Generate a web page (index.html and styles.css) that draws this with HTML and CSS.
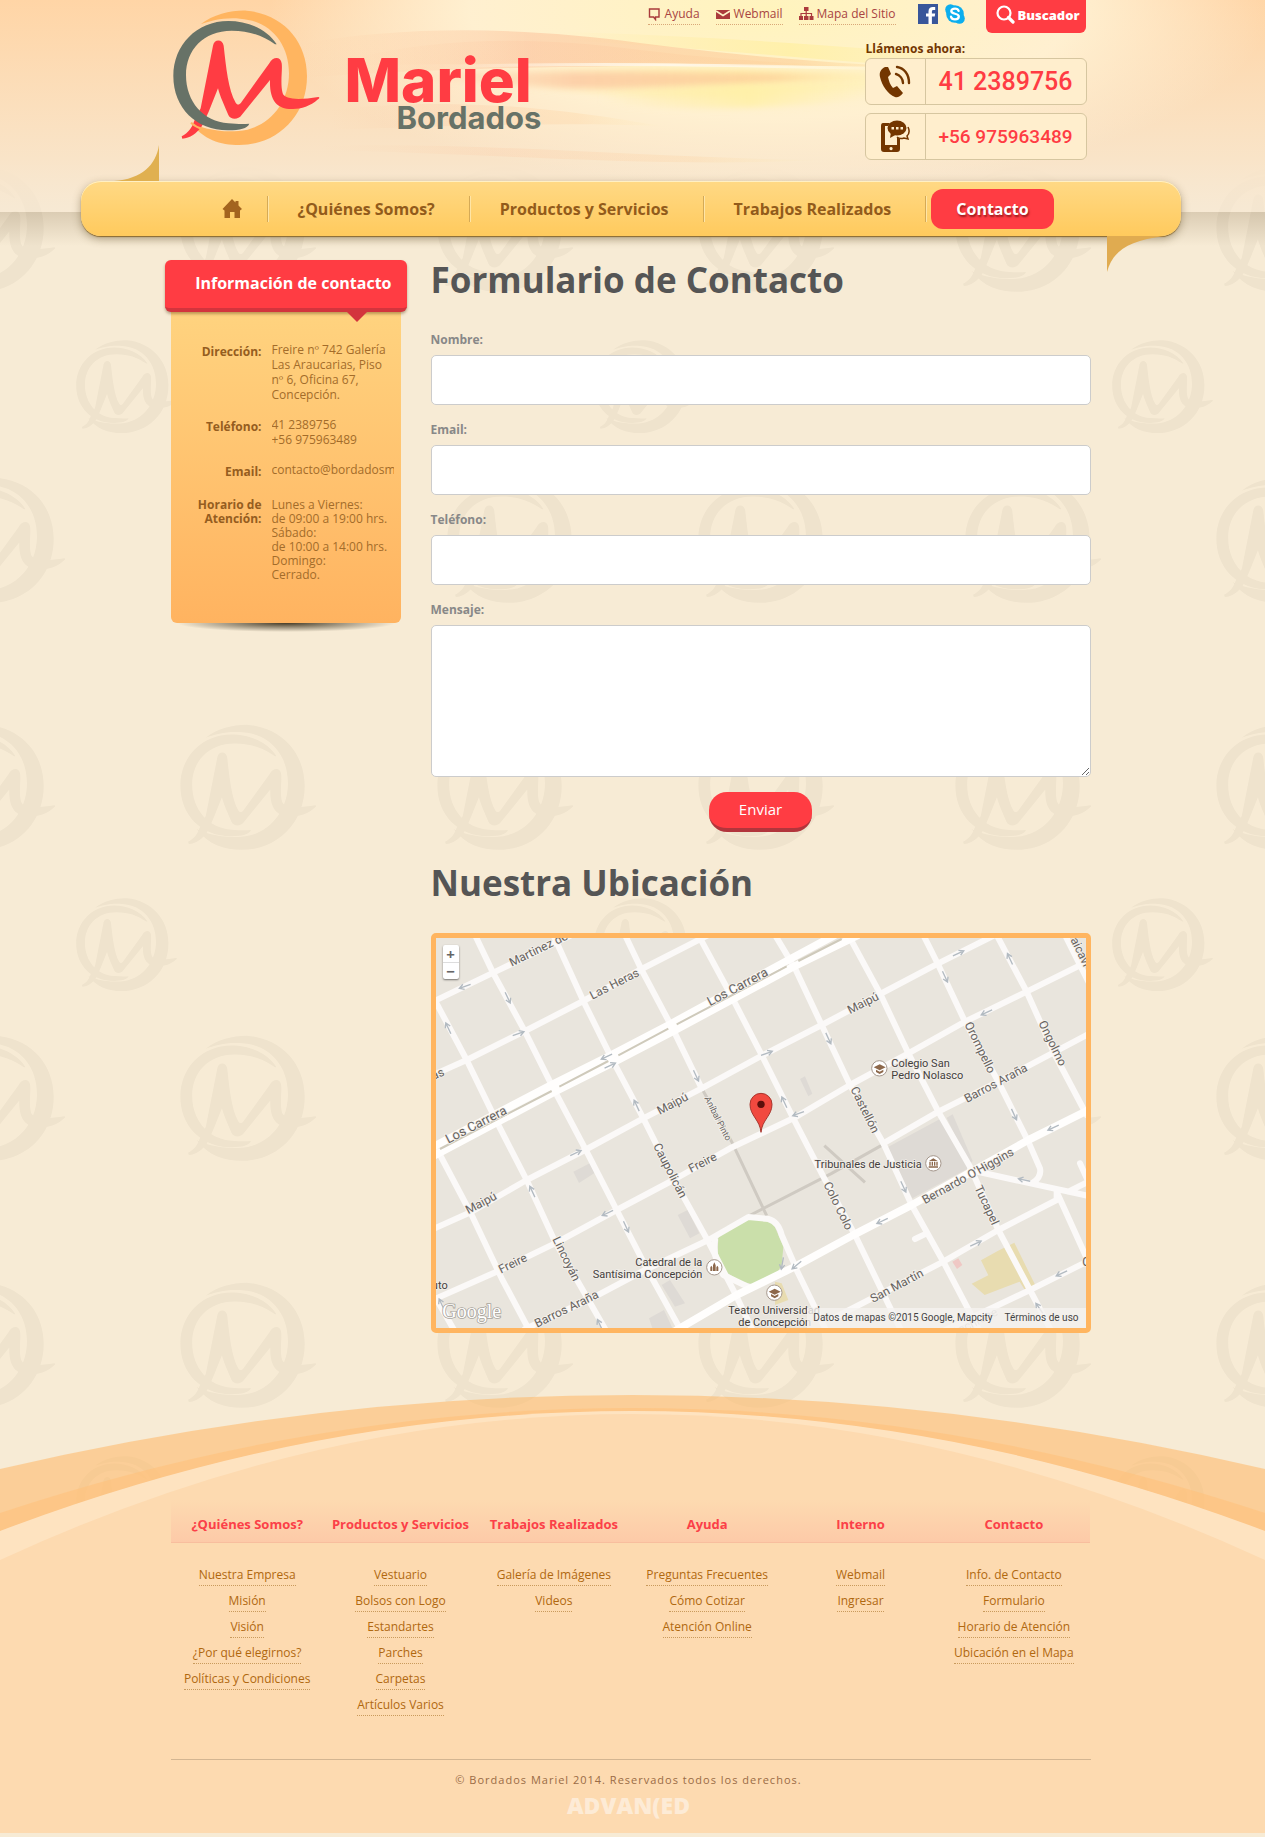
FILE: index.html
```html
<!DOCTYPE html>
<html lang="es">
<head>
<meta charset="utf-8">
<meta name="viewport" content="width=device-width, initial-scale=1">
<title>Contacto - Bordados Mariel</title>
<link rel="stylesheet" href="styles.css">
</head>
<body>
<div class="page">

<svg class="watermarks" aria-hidden="true">
  <defs>
    <path id="mark-ring" d="M122 73C160 42 220 30 260 32C370 42 441 125 441 228C441 350 350 435 238 435C180 435 130 418 92 368C115 380 170 398 235 393C320 388 387 315 387 220C387 130 330 62 240 56C190 52 155 62 122 73Z"/>
    <path id="mark-arc" d="M350 133C320 85 260 63 205 63C110 63 40 135 40 228C40 325 110 392 205 391C240 391 262 385 268 371C250 373 230 372 205 370C130 365 78 305 78 225C78 150 130 92 215 92C270 92 310 108 345 133Z"/>
    <path id="mark-m" d="M65 409C85 398 95 385 103 362L122 325L159 137C162 116 188 116 191 137C198 200 205 270 227 308C232 316 238 314 243 308L328 190C338 170 362 168 365 190C368 210 360 250 368 280C375 300 420 300 475 291C480 292 478 296 474 298C450 320 420 328 395 327C350 327 328 300 330 240L245 345C235 360 212 360 205 345C195 320 180 290 174 265L146 335L126 378C110 400 90 415 67 416Z"/>
    <g id="mark"><use href="#mark-ring"/><use href="#mark-m"/><use href="#mark-arc"/></g>
    <pattern id="tile" width="518" height="558" patternUnits="userSpaceOnUse">
      <g fill="#efe3cd">
        <use href="#mark" transform="translate(168 157) scale(.31)"/>
        <use href="#mark" transform="translate(425 157) scale(.31)"/>
        <use href="#mark" transform="translate(-93 157) scale(.31)"/>
        <use href="#mark" transform="translate(67 333) scale(.23)"/>
        <use href="#mark" transform="translate(168 468) scale(.31)"/>
        <use href="#mark" transform="translate(435 468) scale(.31)"/>
        <use href="#mark" transform="translate(-83 468) scale(.31)"/>
        <use href="#mark" transform="translate(168 -90) scale(.31)"/>
        <use href="#mark" transform="translate(435 -90) scale(.31)"/>
        <use href="#mark" transform="translate(-83 -90) scale(.31)"/>
      </g>
    </pattern>
  </defs>
  <rect width="100%" height="100%" fill="url(#tile)"/>
</svg>

<svg class="sky" viewBox="0 0 1265 212" preserveAspectRatio="none" aria-hidden="true">
  <defs>
    <linearGradient id="base" x1="0" y1="0" x2="0" y2="1">
      <stop offset="0" stop-color="#ffd5a6"/><stop offset=".75" stop-color="#f9e4c8"/><stop offset="1" stop-color="#f7e8d3" stop-opacity=".6"/>
    </linearGradient>
    <radialGradient id="glow" gradientUnits="userSpaceOnUse" cx="0" cy="0" r="1" gradientTransform="translate(770 10) scale(500 180)">
      <stop offset="0" stop-color="#fff4bd"/><stop offset=".6" stop-color="#fff1d2" stop-opacity=".95"/><stop offset="1" stop-color="#fff1d8" stop-opacity="0"/>
    </radialGradient>
    <linearGradient id="band" x1="0" y1="0" x2="1" y2="0">
      <stop offset="0" stop-color="#fdcfa5" stop-opacity="0"/><stop offset=".35" stop-color="#fcc6a0" stop-opacity=".75"/><stop offset=".75" stop-color="#fdcf99" stop-opacity=".8"/><stop offset="1" stop-color="#ffeaa5" stop-opacity=".1"/>
    </linearGradient>
    <linearGradient id="gold" x1="0" y1="0" x2="1" y2="0">
      <stop offset="0" stop-color="#ffedad" stop-opacity="0"/><stop offset=".5" stop-color="#fff0a8" stop-opacity=".9"/><stop offset="1" stop-color="#fff0b5" stop-opacity="0"/>
    </linearGradient>
    <linearGradient id="line" x1="0" y1="0" x2="1" y2="0">
      <stop offset="0" stop-color="#fff" stop-opacity="0"/><stop offset=".5" stop-color="#fff7e6"/><stop offset="1" stop-color="#fff" stop-opacity="0"/>
    </linearGradient>
    <filter id="soft" x="-10%" y="-40%" width="120%" height="180%"><feGaussianBlur stdDeviation="3"/></filter>
  </defs>
  <rect width="1265" height="212" fill="url(#base)"/>
  <rect width="1265" height="212" fill="url(#glow)"/>
  <path fill="url(#gold)" d="M560 32C720 36 860 48 1020 60L1000 72C850 64 740 50 560 40Z"/>
  <path fill="url(#band)" opacity=".8" d="M300 44C400 26 520 26 640 43C760 58 860 66 960 68C740 64 480 64 300 78Z"/>
  <path fill="url(#band)" d="M340 62C430 36 540 36 640 50C740 62 840 66 900 68C740 62 480 62 340 66Z" opacity=".4"/>
  <path fill="url(#gold)" filter="url(#soft)" d="M480 70C640 64 800 72 1000 76L980 84C860 84 740 106 600 94C540 90 510 84 480 80Z"/>
  <path fill="url(#band)" filter="url(#soft)" d="M400 74C580 70 720 72 900 76C780 80 660 90 560 88C500 84 460 80 400 78Z"/>
  <path stroke="url(#line)" stroke-width="3" fill="none" d="M440 67C580 62 720 65 900 69"/>
  <path fill="url(#gold)" filter="url(#soft)" d="M600 92C700 88 800 84 900 86C860 108 700 112 600 104Z"/>
  <path fill="url(#band)" opacity=".35" d="M330 110C450 96 560 108 660 126C560 122 450 126 330 130Z"/>
  <path fill="url(#band)" opacity=".3" d="M320 146C500 142 640 158 820 160C660 168 500 154 320 150Z"/>
</svg>
<div class="sky-shadow"></div>

<header class="top wrap">
  <a class="brand" href="#">
    <svg class="brand-mark" viewBox="33 30 450 408" aria-hidden="true">
      <use href="#mark-ring" fill="#ffb560"/>
      <use href="#mark-m" fill="#ff3c43"/>
      <use href="#mark-arc" fill="#677267"/>
      <path d="M93 368C104 378 116 384 128 387" stroke="#ffb560" stroke-width="6" fill="none"/>
    </svg>
    <span class="brand-text"><span class="brand-name">Mariel</span><span class="brand-sub">Bordados</span></span>
  </a>
  <div class="tools">
    <div class="quick">
      <a class="quick-link" href="#"><svg width="14" height="14" viewBox="0 0 14 14" aria-hidden="true"><path d="M1.500 2h9.500v8h-3.500v2.500l-2-2.500h-4z" fill="none" stroke="#a93b3b" stroke-width="1.400"/></svg>Ayuda</a>
      <a class="quick-link" href="#"><svg width="15" height="14" viewBox="0 0 15 14" aria-hidden="true"><path d="M0 3h14v9h-14z" fill="#ab3a3c"/><path d="M0 4l7 4.500l7-4.500" stroke="#fff3c8" stroke-width="1.600" fill="none"/></svg>Webmail</a>
      <a class="quick-link" href="#"><svg width="15" height="14" viewBox="0 0 15 14" aria-hidden="true"><path d="M5 0h4.500v4h-4.500zM0 9h4v4h-4zM5 9h4.500v4h-4.500zM10.500 9h4v4h-4z" fill="#ab3a3c"/><path d="M2 9v-2.500h10.500v2.500M7.200 4v5" stroke="#ab3a3c" stroke-width="1.200" fill="none"/></svg>Mapa del Sitio</a>
      <a class="social" href="#" aria-label="Facebook"><svg width="20" height="20" viewBox="0 0 20 20"><path fill="#38569a" d="M0 0h20v20h-20z"/><path fill="#fff" d="M10.500 20v-7.500h-2.500v-3h2.500v-2c0-3 1.800-4.400 4.300-4.400h2.400v3h-1.700c-1.200 0-1.600.6-1.600 1.600v1.800h3.300l-.5 3h-2.800v7.500z"/></svg></a>
      <a class="social" href="#" aria-label="Skype"><svg width="20" height="20" viewBox="0 0 20 20"><circle cx="10" cy="10" r="8.800" fill="#0caeee"/><circle cx="5.500" cy="5.500" r="5.300" fill="#0caeee"/><circle cx="14.500" cy="14.500" r="5.300" fill="#0caeee"/><path d="M13.600 6.800C13 5 11.600 4.600 10 4.600C7.500 4.600 6.200 5.800 6.300 7.200C6.500 10.700 13.900 8.800 13.800 12.500C13.800 14.300 12.200 15.400 10 15.400C7.800 15.400 6.400 14.500 6 12.700" fill="none" stroke="#fff" stroke-width="2.300" stroke-linecap="round"/></svg></a>
      <button class="search" type="button"><svg width="19" height="19" viewBox="0 0 19 19" aria-hidden="true"><circle cx="8" cy="8" r="6.500" fill="none" stroke="#fff" stroke-width="2.200"/><path d="M12.500 12.500l4.500 4.500" stroke="#fff" stroke-width="3.200" stroke-linecap="round"/></svg>Buscador</button>
    </div>
    <div class="phones">
      <p class="phones-title">Llámenos ahora:</p>
      <div class="phone"><span class="phone-icon"><svg width="32" height="33" viewBox="0 0 32 33" aria-hidden="true"><path fill="#733600" d="M6 2C2 4 0 7 1 12C3 21 9 29 16 32C18 33 21 32 24 28L18 21L14 23C11 20 10 16 9 12L12 9C11 6 10 4 9 2Z"/><path fill="none" stroke="#733600" stroke-width="2.400" stroke-linecap="round" d="M17 9C21 10 24 14 24 18M18 2C25 3 30 9 30 18"/></svg></span><span class="phone-number">41 2389756</span></div>
      <div class="phone"><span class="phone-icon"><svg width="32" height="33" viewBox="0 0 32 33" aria-hidden="true"><path fill="#733600" fill-rule="evenodd" d="M4 3h7l-2 3h-3v19h12v-8l3 2v10q0 3-3 3h-13q-3 0-3-3v-23q0-3 2-3zM12 27a1.600 1.600 0 1 0 .1 0z"/><ellipse cx="18" cy="8" rx="9.500" ry="7.500" fill="#733600"/><path fill="#733600" d="M12 12l-1 6l7-4z"/><path fill="#ffeecd" d="M12.500 7h2.500v2.500h-2.500zM17 7h2.500v2.500h-2.500zM21.500 7h2.500v2.500h-2.500z"/><path fill="none" stroke="#733600" stroke-width="1.500" d="M29 7C31 11 30 14 28 16L29 19L25 18C22 19 19 18 18 17"/></svg></span><span class="phone-number phone-number-long">+56 975963489</span></div>
    </div>
  </div>
</header>

<nav class="nav" aria-label="Principal">
  <svg class="tail tail-left" viewBox="0 0 45 36" aria-hidden="true"><path fill="#e0b050" d="M45 0V36H0C28 34 42 20 45 0Z"/></svg>
  <svg class="tail tail-right" viewBox="0 0 57 36" aria-hidden="true"><path fill="#e0ab50" d="M0 36V0H57C22 5 6 14 0 36Z"/></svg>
  <ul class="nav-list">
    <li><a class="nav-home" href="#" aria-label="Inicio"><svg width="20" height="20" viewBox="0 0 20 20" aria-hidden="true"><path fill="#a3641f" d="M10 0L13.500 3.600V2H16.500V6.500L20 10L18 11.500V19H12.500V13H8V19H2.500V11.500L.5 10Z"/></svg></a></li>
    <li><a href="#">¿Quiénes Somos?</a></li>
    <li><a href="#">Productos y Servicios</a></li>
    <li><a href="#">Trabajos Realizados</a></li>
    <li><a class="nav-active" href="#" aria-current="page">Contacto</a></li>
  </ul>
</nav>

<div class="content wrap">
  <aside class="info">
    <h2 class="info-title">Información de contacto</h2>
    <dl class="info-list">
      <div class="info-row"><dt>Dirección:</dt><dd>Freire nº 742 Galería Las Araucarias, Piso nº 6, Oficina 67, Concepción.</dd></div>
      <div class="info-row"><dt>Teléfono:</dt><dd>41 2389756<br>+56 975963489</dd></div>
      <div class="info-row"><dt>Email:</dt><dd>contacto@bordadosmariel.cl</dd></div>
      <div class="info-row info-hours"><dt>Horario de Atención:</dt><dd>Lunes a Viernes:<br>de 09:00 a 19:00 hrs.<br>Sábado:<br>de 10:00 a 14:00 hrs.<br>Domingo:<br>Cerrado.</dd></div>
    </dl>
  </aside>

  <main class="main">
    <h1>Formulario de Contacto</h1>
    <form class="form">
      <label for="nombre">Nombre:</label>
      <input id="nombre" type="text">
      <label for="email">Email:</label>
      <input id="email" type="email">
      <label for="telefono">Teléfono:</label>
      <input id="telefono" type="tel">
      <label for="mensaje">Mensaje:</label>
      <textarea id="mensaje"></textarea>
      <button class="send" type="submit">Enviar</button>
    </form>
    <h2 class="map-title">Nuestra Ubicación</h2>
    <div class="map">
      <svg class="map-svg" viewBox="33 39 1950 1170" role="img" aria-label="Mapa de Concepción">
        <path fill="#e9e5dd" d="M0 0H2000V1220H0z"/>
        <g fill="#dedad5">
          <path d="M1385 668L1545 582L1630 730L1462 820z"/>
          <path d="M1565 578l18-10l60 140l-12 12z"/>
          <path d="M445 740l55-28l12 30l-50 32zM758 870l30-15l35 70l-28 15zM710 1080l25-15l45 70l-30 10zM672 1180l45-25l25 54h-60zM1125 462l15-8l22 52l-12 8z"/>
        </g>
        <path fill="#e8dcb0" d="M1640 1076l50-25l-22-45l50-28l50-25l66 134l-30 15l-20-32l-105 40zM1050 1070l20 5l20 50l-40 15z"/>
        <path fill="#efc8c4" d="M1582 1010l18-10l12 20l-16 12z"/>
        <path fill="#cadfaa" d="M880 940L900 907L970 882L1015 882L1045 895L1075 965L1070 1020L1050 1055L985 1078L950 1070L897 1038L877 990z"/>
        <g fill="none" stroke="#cfcac2" stroke-width="9">
          <path d="M830 490L920 650L1025 872M965 876L1220 745L1375 658M1198 662L1320 772"/>
        </g>
        <g class="streets">
          <path d="M20 232L205 143L440 30M20 452L125 405L300 318L475 228L650 132L850 30"/>
          <path d="M20 914L140 860L305 765L480 675L655 580L830 490L1005 395L1190 300L1360 210L1540 115L1710 30"/>
          <path d="M20 1126L215 1040L390 955L575 855L745 765L915 670L1105 580L1275 480L1450 385L1620 290L1805 200L2000 104"/>
          <path d="M300 1212L500 1120L660 1035L850 945L970 876L1030 882Q1060 890 1070 930L1110 1022M1375 655L1540 560L1720 470L2000 322"/>
          <path d="M870 945Q862 1000 895 1050L975 1088M1220 1182L1555 1010L1720 915L1895 825L1895 800M1635 735L1770 765L2000 815M1895 800L1990 1010M1560 1216L1815 1095L2000 1003M1930 800L2000 765M1965 715L1990 770"/>
          <path d="M33 232L125 405L215 590L305 765L390 950L545 1220M150 30L205 145L300 320L385 490L480 670L575 855L665 1030L770 1220M385 30L475 228L560 400L655 580L745 760L850 950L930 1105L985 1220"/>
          <path d="M600 30L650 135L740 305L830 490M820 30L920 215L1010 390L1105 580L1195 755L1290 930L1430 1220M1050 30L1110 130L1190 300L1275 480L1375 655L1460 840L1555 1010L1665 1220"/>
          <path d="M1270 30L1365 205L1450 385L1540 560L1635 725L1720 915L1815 1095L1880 1220M1495 30L1540 120L1620 290L1720 470L1810 650L1845 730Q1850 755 1825 772M1715 30L1805 200L1890 390L1985 570M1920 30L1990 170"/>
          <path d="M40 680L140 870L230 1060L315 1220M33 1120L90 1220M1110 1025L1205 1220M1470 942L1505 925"/>
        </g>
        <g class="avenues">
          <path d="M20 668L375 482L555 392L735 298L1090 105L1230 30M20 696L390 500L570 410L745 318L1100 128L1300 30"/>
          <path d="M750 1218L935 1110L1110 1025L1285 930L1460 840L1640 740L1810 645L2000 550"/>
        </g>
        <path stroke="#cfcabb" stroke-width="6" fill="none" d="M45 672L380 498M403 485L550 408M580 391L730 311M755 298L1085 124M1120 108L1250 42"/>
        <defs><path id="arrow" d="M-18 0H16M4-8L18 0L4 8"/></defs>
        <g class="arrows">
          <use href="#arrow" transform="translate(280 326) rotate(-20)"/><use href="#arrow" transform="translate(555 422) rotate(-25)"/>
          <use href="#arrow" transform="translate(452 684) rotate(-25)"/><use href="#arrow" transform="translate(1025 385) rotate(-20)"/>
          <use href="#arrow" transform="translate(1600 85) rotate(-25)"/><use href="#arrow" transform="translate(1652 956) rotate(-25)"/>
          <use href="#arrow" transform="translate(120 184) rotate(160)"/><use href="#arrow" transform="translate(545 395) rotate(155)"/>
          <use href="#arrow" transform="translate(548 864) rotate(155)"/><use href="#arrow" transform="translate(1120 566) rotate(160)"/>
          <use href="#arrow" transform="translate(1685 262) rotate(155)"/><use href="#arrow" transform="translate(1885 608) rotate(155)"/>
          <use href="#arrow" transform="translate(1372 888) rotate(155)"/><use href="#arrow" transform="translate(1798 765) rotate(192)"/>
          <use href="#arrow" transform="translate(1910 1045) rotate(155)"/><use href="#arrow" transform="translate(1115 1020) rotate(140)"/>
          <use href="#arrow" transform="translate(248 218) rotate(65)"/><use href="#arrow" transform="translate(813 452) rotate(65)"/>
          <use href="#arrow" transform="translate(603 905) rotate(65)"/><use href="#arrow" transform="translate(1210 340) rotate(65)"/>
          <use href="#arrow" transform="translate(1435 785) rotate(65)"/><use href="#arrow" transform="translate(1560 155) rotate(65)"/>
          <use href="#arrow" transform="translate(1767 568) rotate(65)"/><use href="#arrow" transform="translate(1072 1015) rotate(100)"/>
          <use href="#arrow" transform="translate(70 310) rotate(-115)"/><use href="#arrow" transform="translate(635 542) rotate(-115)"/>
          <use href="#arrow" transform="translate(322 800) rotate(-115)"/><use href="#arrow" transform="translate(1078 532) rotate(-115)"/>
          <use href="#arrow" transform="translate(1755 102) rotate(-115)"/><use href="#arrow" transform="translate(525 1200) rotate(-115)"/>
          <use href="#arrow" transform="translate(1843 1150) rotate(-125)"/><use href="#arrow" transform="translate(50 1138) rotate(-115)"/>
        </g>
        <g class="street-names">
          <text transform="translate(260 125) rotate(-26)">Martinez de</text>
          <text transform="translate(502 224) rotate(-27)">Las Heras</text>
          <text class="avenue-name" transform="translate(855 244) rotate(-28)">Los Carrera</text>
          <text class="avenue-name" transform="translate(70 656) rotate(-27)">Los Carrera</text>
          <text transform="translate(130 868) rotate(-28)">Maipú</text>
          <text transform="translate(704 570) rotate(-28)">Maipú</text>
          <text transform="translate(1275 268) rotate(-27)">Maipú</text>
          <text transform="translate(228 1046) rotate(-26)">Freire</text>
          <text transform="translate(798 744) rotate(-27)">Freire</text>
          <text transform="translate(336 1208) rotate(-26)">Barros Araña</text>
          <text transform="translate(1626 534) rotate(-28)">Barros Araña</text>
          <text transform="translate(1500 838) rotate(-29)">Bernardo O'Higgins</text>
          <text transform="translate(1344 1134) rotate(-28)">San Martín</text>
          <text transform="translate(684 662) rotate(63)">Caupolicán</text>
          <text transform="translate(382 942) rotate(64)">Lincoyán</text>
          <text transform="translate(1195 778) rotate(64)">Colo Colo</text>
          <text transform="translate(1276 492) rotate(64)">Castellón</text>
          <text transform="translate(1618 298) rotate(64)">Orompello</text>
          <text transform="translate(1840 294) rotate(64)">Ongolmo</text>
          <text transform="translate(1648 788) rotate(65)">Tucapel</text>
          <text transform="translate(1926 24) rotate(64)">Paicaví</text>
          <text class="lane-name" transform="translate(838 520) rotate(63)">Aníbal Pinto</text>
          <text transform="translate(-26 488) rotate(-24)">Heras</text>
          <text opacity=".4" transform="translate(1585 1238) rotate(-27)">Cochrane</text>
          <text x="1972" y="1022">C</text>
        </g>
        <g class="places">
          <text x="1399" y="425">Colegio San</text><text x="1399" y="461">Pedro Nolasco</text>
          <text x="1490" y="728" text-anchor="end">Tribunales de Justicia</text>
          <text x="832" y="1022" text-anchor="end">Catedral de la</text><text x="832" y="1058" text-anchor="end">Santísima Concepción</text>
          <text x="910" y="1166">Teatro Universidad</text><text x="940" y="1202">de Concepción</text>
          <text x="68" y="1092" text-anchor="end">Instituto</text>
        </g>
        <g fill="#fff" stroke="#a5978c" stroke-width="3"><circle cx="868" cy="1027" r="23"/><circle cx="1363" cy="430" r="23"/><circle cx="1525" cy="715" r="23"/><circle cx="1048" cy="1103" r="23"/></g>
        <g fill="#8d684b">
          <path id="cap" d="M1346 427l18-9l18 9l-18 9zM1353 434l11 6l11-6v7l-11 6l-11-6z"/>
          <use href="#cap" x="-315" y="673"/>
          <path d="M1512 708l13-8l13 8zM1513 710h4v12h-4zM1520 710h4v12h-4zM1527 710h4v12h-4zM1534 710h4v12h-4zM1511 724h28v4h-28z"/>
          <path d="M856 1038v-11l3-5l3 5v11zM864 1038v-17l4-9l4 9v17zM874 1038v-11l3-5l3 5v11z"/>
        </g>
        <path fill="#f1493f" stroke="#a8352d" stroke-width="3" d="M1008 622C1005 585 975 572 975 538A33 33 0 0 1 1041 538C1041 572 1011 585 1008 622Z"/>
        <circle cx="1008" cy="538" r="11" fill="#5b0f0b"/>
        <text class="google" x="52" y="1178">Google</text>
      </svg>
      <div class="zoom"><button type="button" aria-label="Acercar">+</button><button type="button" aria-label="Alejar">−</button></div>
      <div class="credits"><span>Datos de mapas ©2015 Google, Mapcity</span><a href="#">Términos de uso</a></div>
    </div>
  </main>
</div>

<footer class="footer">
  <svg class="hill" viewBox="0 0 1265 165" preserveAspectRatio="none" aria-hidden="true">
    <path fill="#ffb55f" fill-opacity=".52" d="M0 74Q632-74 1265 74V165H0z"/>
    <path fill="#ffc27c" fill-opacity=".6" d="M0 118Q632-92 1265 118V165H0z"/>
    <path fill="#fee4c3" fill-opacity=".96" d="M0 136Q632-104 1265 136V165H0z"/>
    <path fill="#fddab0" d="M0 165Q632-127 1265 165z"/>
  </svg>
  <div class="wrap">
    <div class="links">
      <section><h3>¿Quiénes Somos?</h3><ul><li><a href="#">Nuestra Empresa</a></li><li><a href="#">Misión</a></li><li><a href="#">Visión</a></li><li><a href="#">¿Por qué elegirnos?</a></li><li><a href="#">Políticas y Condiciones</a></li></ul></section>
      <section><h3>Productos y Servicios</h3><ul><li><a href="#">Vestuario</a></li><li><a href="#">Bolsos con Logo</a></li><li><a href="#">Estandartes</a></li><li><a href="#">Parches</a></li><li><a href="#">Carpetas</a></li><li><a href="#">Artículos Varios</a></li></ul></section>
      <section><h3>Trabajos Realizados</h3><ul><li><a href="#">Galería de Imágenes</a></li><li><a href="#">Videos</a></li></ul></section>
      <section><h3>Ayuda</h3><ul><li><a href="#">Preguntas Frecuentes</a></li><li><a href="#">Cómo Cotizar</a></li><li><a href="#">Atención Online</a></li></ul></section>
      <section><h3>Interno</h3><ul><li><a href="#">Webmail</a></li><li><a href="#">Ingresar</a></li></ul></section>
      <section><h3>Contacto</h3><ul><li><a href="#">Info. de Contacto</a></li><li><a href="#">Formulario</a></li><li><a href="#">Horario de Atención</a></li><li><a href="#">Ubicación en el Mapa</a></li></ul></section>
    </div>
    <div class="legal">
      <p>© Bordados Mariel 2014. Reservados todos los derechos.</p>
      <a class="maker" href="#">ADVAN(ED</a>
    </div>
  </div>
</footer>
</div>
</body>
</html>
```
FILE: styles.css
```css
* { box-sizing: border-box; }

body {
  margin: 0;
  background: #f7ebd5;
  font: 12px/16px "Open Sans", "Noto Sans", sans-serif;
  color: #555;
}

h1, h2, h3, p, ul, dl, dd { margin: 0; padding: 0; }
ul { list-style: none; }
a { color: inherit; text-decoration: none; }
button { font-family: inherit; border: 0; cursor: pointer; }

.page { position: relative; isolation: isolate; padding-bottom: 4px; overflow: hidden; }
.wrap { width: 920px; max-width: 100%; margin: 0 auto; }
.top, .nav, .content, .footer .wrap { position: relative; right: 2px; }

.watermarks { position: absolute; inset: 0; width: 100%; height: 100%; z-index: -3; }
.sky { position: absolute; top: 0; left: 0; width: 100%; height: 212px; z-index: -2; }
.sky-shadow {
  position: absolute; top: 212px; left: 0; width: 100%; height: 34px; z-index: -2;
  background: linear-gradient(rgba(120, 95, 60, .22), rgba(120, 95, 60, 0));
}

/* Header */
.top { display: flex; justify-content: space-between; align-items: flex-start; height: 181px; padding-right: 4px; }
.brand { display: flex; gap: 24px; padding-top: 10px; }
.brand-mark { width: 150px; height: 136px; }
.brand-text { display: flex; flex-direction: column; align-items: flex-start; padding-top: 46px; font-family: Inter, sans-serif; }
.brand-name { font-size: 60px; line-height: 48px; font-weight: 800; color: #ff3c43; }
.brand-sub { font-size: 31px; line-height: 28px; font-weight: 700; color: #677267; padding-left: 52px; }

.tools { display: flex; flex-direction: column; align-items: flex-end; }
.quick { display: flex; align-items: flex-start; gap: 16px; padding-right: 1px; color: #a94442; }
.quick-link { display: flex; align-items: center; gap: 3px; margin-top: 5px; height: 20px; padding-bottom: 2px; border-bottom: 1px dotted #d9a878; }
.social { height: 20px; margin: 4px -9px 0 0; }
.quick-link + .social { margin-left: 6px; }
.social svg { display: block; }
.search {
  display: flex; align-items: center; gap: 3px; width: 100px; height: 33px; margin-left: 14px; padding: 0 0 4px 10px;
  background: #ff3c43; border-radius: 0 0 6px 6px; color: #fff; font-size: 13px; font-weight: 800;
}
.phones { width: 222px; padding-top: 8px; }
.phones-title { padding-left: 1px; margin-bottom: 1px; font-weight: 700; color: #733600; }
.phone { display: flex; height: 47px; margin-bottom: 8px; background: #ffeecd; border: 1px solid #d6c6a0; border-radius: 6px; }
.phone-icon { display: flex; flex: none; align-items: center; justify-content: center; width: 60px; border-right: 1px solid #d6c6a0; }
.phone-number { flex: 1; text-align: center; white-space: nowrap; font: 500 25px/46px Roboto, sans-serif; color: #ff3c43; }
.phone-number-long { font-size: 19px; }

/* Navigation */
.nav {
  width: 1100px; max-width: 100%; margin: 0 auto; height: 55px;
  background: linear-gradient(#ffd985, #ffca5d); border-radius: 20px;
  box-shadow: inset 0 1px 0 #fff0c4, 0 1px 1px #8a6a30, 0 3px 8px rgba(90, 70, 30, .45);
}
.nav-list { display: flex; align-items: center; height: 55px; padding-left: 116px; }
.nav-list li { display: flex; align-items: center; height: 26px; border-right: 1px solid #d5aa56; box-shadow: 1px 0 0 #ffe5a6; }
.nav-list li:last-child { border: 0; box-shadow: none; }
.nav-list a { padding: 0 34px 0 30px; font-size: 16px; line-height: 24px; font-weight: 700; color: #925b1b; }
.nav-list .nav-home { padding: 0 25px; line-height: 0; }
.nav-list .nav-active {
  margin-left: 5px; padding: 8px 25px; border-radius: 12px; background: #ff3c43; color: #fff;
  text-shadow: 1px 2px 2px rgba(80, 0, 0, .6);
}
.tail { position: absolute; height: 36px; }
.tail-left { width: 45px; left: 33px; bottom: 100%; }
.tail-right { width: 57px; right: 17px; top: 100%; }

/* Contact card */
.content { display: flex; align-items: flex-start; gap: 24px; padding: 24px 0 62px; }
.info { position: relative; flex: 0 0 242px; min-width: 0; margin-left: -6px; padding-bottom: 1px; }
.info-title {
  position: relative; z-index: 1; height: 52px; padding-right: 15px;
  background: #ff3c43; border-bottom: 4px solid #d3343d; border-radius: 6px; color: #fff;
  font-size: 16px; line-height: 47px; font-weight: 700; text-align: right; white-space: nowrap;
  box-shadow: 0 2px 3px rgba(90, 60, 20, .4);
}
.info-title::after {
  content: ""; position: absolute; right: 40px; top: 100%; margin-top: 4px;
  border: 10px solid transparent; border-top-color: #d3343d; border-bottom: 0;
}
.info-list {
  position: relative; margin: 0 6px; height: 311px; padding: 30px 7px 0 15px;
  background: linear-gradient(#ffd37f, #ffb360); border-radius: 0 0 6px 6px; color: #a36c2a;
}
.info::after {
  content: ""; position: absolute; z-index: -1; left: 12px; right: 12px; bottom: -8px; height: 18px;
  background: radial-gradient(closest-side, rgba(50, 40, 20, .9), rgba(60, 50, 30, 0));
}
.info-row { display: flex; gap: 10px; margin-bottom: 15px; line-height: 15px; }
.info-row dt { flex: 0 0 76px; padding-top: 2px; text-align: right; font-weight: 700; color: #955d20; }
.info-row dd { flex: 1; min-width: 0; overflow: hidden; }
.info-hours { line-height: 14px; margin-top: 19px; }
.info-hours dt { padding-top: 0; }

/* Form */
.main { flex: 1; min-width: 0; }
h1, .map-title { font-size: 35px; line-height: 40px; font-weight: 700; color: #555; margin-bottom: 30px; }
.form { display: flex; flex-direction: column; }
.form label { line-height: 20px; margin-bottom: 5px; font-weight: 700; color: #888; }
.form input, .form textarea { width: 100%; height: 50px; margin: 0 0 15px; padding: 10px; background: #fff; border: 1px solid #ccc; border-radius: 5px; font: inherit; }
.form textarea { height: 152px; resize: vertical; }
.send {
  align-self: center; width: 103px; height: 40px; padding: 0 0 2px; background: #ff3c43;
  border-bottom: 4px solid #b2353c; border-radius: 18px; color: #fff; font-size: 15px;
}
.map-title { margin-top: 31px; }

/* Map */
.map { position: relative; border: 5px solid #ffb560; border-radius: 5px; overflow: hidden; background: #e9e5dd; }
.map-svg { display: block; width: 100%; height: auto; font-family: Roboto, sans-serif; }
.streets { fill: none; stroke: #fbf9f8; stroke-width: 18; stroke-linejoin: round; stroke-linecap: round; }
.avenues { fill: none; stroke: #fffefd; stroke-width: 23; stroke-linejoin: round; }
.arrows { fill: none; stroke: #b2bac1; stroke-width: 4; }
.street-names { font-size: 36px; fill: #66625e; stroke: #f4f1ec; stroke-width: 5; paint-order: stroke; }
.avenue-name { font-size: 39px; }
.lane-name { font-size: 27px; }
.places { font-size: 33px; fill: #44403c; stroke: #f1eee9; stroke-width: 5; paint-order: stroke; }
.google { font-family: "Liberation Serif", serif; font-size: 60px; fill: #fff; stroke: #aaa59e; stroke-width: 5; paint-order: stroke; }
.zoom {
  position: absolute; left: 7px; top: 7px; display: flex; flex-direction: column; width: 16px;
  background: #fff; border-radius: 2px; box-shadow: 0 1px 2px rgba(0, 0, 0, .5);
}
.zoom button { height: 17px; padding: 0; background: none; font-size: 15px; line-height: 16px; font-weight: 700; color: #666; }
.zoom button + button { border-top: 1px solid #ddd; }
.credits {
  position: absolute; right: 0; bottom: 0; display: flex; gap: 12px; height: 20px; padding: 0 7px 0 6px;
  background: rgba(245, 243, 240, .8); font: 10px/20px Roboto, sans-serif; color: #444;
}

/* Footer */
.footer {
  position: relative; isolation: isolate; padding-top: 105px;
  background: linear-gradient(transparent 165px, #fddab0 165px);
}
.hill { position: absolute; top: 0; left: 0; width: 100%; height: 165px; z-index: -1; }
.links { display: grid; grid-template-columns: repeat(6, 1fr); padding-bottom: 40px; border-bottom: 1px solid #d3b591; text-align: center; }
.links h3 {
  height: 43px; padding-top: 4px; font-size: 13px; line-height: 40px; color: #fb4048; white-space: nowrap;
  background: linear-gradient(rgba(253, 203, 170, 0), #fdcaa8); border-bottom: 1px solid #f8be9e;
}
.links ul { padding-top: 20px; }
.links li { height: 26px; line-height: 16px; padding-top: 4px; white-space: nowrap; }
.links li a { display: inline-block; height: 19px; border-bottom: 1px dotted #c99a5c; color: #b0680f; }
.legal { display: flex; flex-direction: column; align-items: center; padding: 10px 4px 15px 0; }
.legal p { font-size: 11px; line-height: 20px; letter-spacing: 1px; color: #9a6b45; }
.maker { margin-top: 3px; font-size: 23px; line-height: 25px; font-weight: 800; color: #fdebd6; }
```
